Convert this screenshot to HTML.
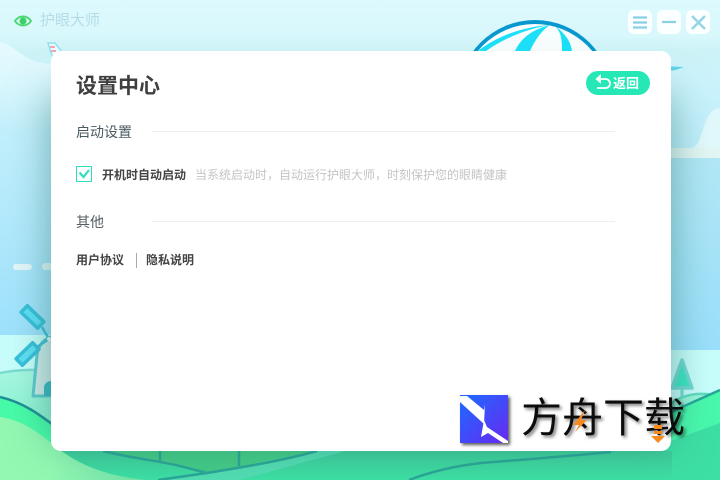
<!DOCTYPE html>
<html lang="zh"><head><meta charset="utf-8"><title>护眼大师</title>
<style>
html,body{margin:0;padding:0;width:720px;height:480px;overflow:hidden}
body{position:relative;font-family:"Liberation Sans","Noto Sans CJK SC",sans-serif}
.t{position:absolute;white-space:nowrap;line-height:1}
svg{position:absolute;left:0;top:0}
.sh{position:absolute;left:51px;top:95px;width:620px;height:345px;box-shadow:0 0 38px rgba(40,115,105,.55)}
.card{position:absolute;left:51px;top:51px;width:620px;height:400px;background:#fff;border-radius:10px}
.wb{position:absolute;top:10px;width:24px;height:24px;border-radius:6px;background:rgba(255,255,255,.88)}
.ln{position:absolute;left:152px;width:463px;height:1px;background:#eeeeee}
.logo{position:absolute;left:460px;top:395px;width:48px;height:48px;box-shadow:2px 2px 3px rgba(0,0,0,.65)}
</style></head><body>
<svg width="720" height="480" viewBox="0 0 720 480">
<defs>
<linearGradient id="sky" x1="0" y1="0" x2="0" y2="1"><stop offset="0" stop-color="#ddfafe"/><stop offset=".1" stop-color="#d9f8fc"/><stop offset=".15" stop-color="#cdf3f7"/><stop offset=".24" stop-color="#cbf3fc"/><stop offset="1" stop-color="#9de1fc"/></linearGradient>
<linearGradient id="rsky" x1="0" y1="0" x2="0" y2="1"><stop offset="0" stop-color="#b2e8f6"/><stop offset="1" stop-color="#9adffb"/></linearGradient>
<linearGradient id="hill" x1="0" y1="0" x2="0" y2="1"><stop offset="0" stop-color="#a8f7e2"/><stop offset="1" stop-color="#6cefc0"/></linearGradient>
<linearGradient id="bl" x1="0" y1="0" x2="0" y2="1"><stop offset="0" stop-color="#fbfefe"/><stop offset="1" stop-color="#dceff0"/></linearGradient>
<linearGradient id="lg" x1="0" y1="0" x2="1" y2="1"><stop offset="0" stop-color="#1a6cff"/><stop offset="1" stop-color="#6a28f2"/></linearGradient>
<linearGradient id="cl" x1="0" y1="0" x2="0" y2="1"><stop offset="0" stop-color="#e6faff"/><stop offset="1" stop-color="#e6faff" stop-opacity="0"/></linearGradient>
<linearGradient id="hl" x1="0" y1="0" x2="1" y2="0"><stop offset=".35" stop-color="#92f8b2"/><stop offset="1" stop-color="#70dfa8"/></linearGradient>
<linearGradient id="bot" x1="0" y1="0" x2="0" y2="1"><stop offset="0" stop-color="#3ecb9a"/><stop offset="1" stop-color="#3ddfa4"/></linearGradient>
</defs>
<rect width="720" height="340" fill="url(#sky)"/>
<path d="M0 42C15 46 22 58 38 62C45 64 52 64 60 63V130H0Z" fill="url(#cl)"/>
<!-- balloon -->
<circle cx="535" cy="97" r="77" fill="#0898cf"/>
<circle cx="535" cy="98" r="74" fill="url(#bl)"/>
<path d="M550 25C522 27 497 36 478 51H486C503 39 526 29 550 25Z" fill="#1de0f8"/>
<path d="M550 25C530 30 520 40 515 51H530C535 40 542 30 550 25Z" fill="#1de0f8"/>
<path d="M555 26C562 33 562 42 562 51H572C571 42 565 33 555 26Z" fill="#1de0f8"/>
<!-- plane tail -->
<path d="M48 43L55 43L62 52L52 56Z" fill="#eafcff" stroke="#90e2f0" stroke-width="1.500"/>
<rect x="50" y="46" width="5" height="2" fill="#f2a8b0"/><rect x="51" y="50" width="5" height="2" fill="#f2a8b0"/>
<!-- ground -->
<rect x="0" y="335" width="720" height="145" fill="#c8fdfb"/>
<!-- right side sky -->
<rect x="660" y="158" width="60" height="192" fill="url(#rsky)"/>
<path d="M660 148H690C705 148 700 110 720 108V158H660Z" fill="#e2f9fc"/>
<rect x="660" y="148" width="60" height="10" fill="#e3f6f4"/>
<path d="M660 66L684 67C676 70 670 72 668 70Z" fill="#5fd6e8"/>
<rect x="13" y="264" width="19" height="6" rx="3" fill="#e4f7fa"/>
<rect x="42" y="263" width="20" height="7" rx="3.500" fill="#e3f8f8"/>
<!-- tree -->
<path d="M682 360L692 388H672Z" fill="#3fe6c4" stroke="#72d9d2" stroke-width="3.500" stroke-linejoin="round"/>
<rect x="680.500" y="388" width="3" height="16" fill="#72d9d2"/>
<!-- far hills -->
<path d="M0 373C25 367 50 368 70 373L110 380 240 400H500L640 410 668 405C685 393 700 392 720 396V480H0Z" fill="url(#hill)"/>
<path d="M0 373C20 369 40 369 60 372" fill="none" stroke="#7cdcd0" stroke-width="2.500"/>
<path d="M668 405C685 393 700 392 720 396" fill="none" stroke="#5fdcc0" stroke-width="2.500"/>
<!-- windmill -->
<path d="M33 396L37 355C38 345 45 338 52 337H70V396Z" fill="#cfecea" stroke="#5cc9cc" stroke-width="3" stroke-linejoin="round"/>
<path d="M44 396V388A7 7 0 0 1 58 388V396Z" fill="#3ab8c4"/>
<g stroke="#38c0da" fill="#5de0f4" stroke-width="3.500" stroke-linejoin="round">
<rect x="21" y="312.500" width="23" height="9" transform="rotate(44 32.500 317)"/>
<rect x="16" y="349.500" width="23" height="9" transform="rotate(-44 27.500 354)"/>
</g>
<path d="M42 327L49 339M37 347L49 339" stroke="#38c0da" stroke-width="2.500"/>
<circle cx="49" cy="339" r="2" fill="#e8fbfb"/>
<!-- main field -->
<path d="M0 397C25 403 40 415 60 430L90 451H670L720 390V480H0Z" fill="#48fba8"/>
<path d="M671 412L720 390V480H660Z" fill="#48f8ac"/>
<path d="M60 430C85 452 120 470 160 480H0V430Z" fill="#48fba8"/>
<path d="M660 445L720 423V480H660Z" fill="#3ddfa4"/>
<rect x="60" y="451" width="620" height="29" fill="url(#bot)"/>
<path d="M672 451H720V480H672Z" fill="#3ddfa4"/>
<path d="M103 451L160 462 207 473 317 451Z" fill="#44c986"/>
<path d="M207 473L317 451H345L240 480H158Z" fill="#52dbb2"/>
<path d="M0 417C25 420 42 436 60 450C85 468 110 476 145 480H0Z" fill="url(#hl)"/>
<path d="M671 412L720 390" stroke="#25a898" stroke-width="2.500" fill="none"/>
<path d="M0 397C25 403 40 415 60 430" stroke="#1f8f96" stroke-width="2.500" fill="none"/>
<path d="M103 451C130 458 160 461 180 466L207 473M158 480L207 473C250 466 285 460 317 451" stroke="#2ba596" stroke-width="2.500" fill="none"/>
<path d="M160 451V462M239 451V466" stroke="#2ba596" stroke-width="2.500" fill="none"/>
<path d="M409 480C430 472 455 466 481 463C530 459 570 456 611 452" stroke="#2ba596" stroke-width="2.500" fill="none"/>
</svg>
<div class="sh"></div>
<div class="card"></div>
<!-- titlebar -->
<svg width="720" height="480" viewBox="0 0 720 480">
<path d="M15 21C19 15 27 15 31 21C27 27 19 27 15 21Z" fill="none" stroke="#4ed874" stroke-width="2"/>
<circle cx="23" cy="21" r="3.500" fill="#3ecf68"/>
</svg>
<div class="t" style="left:40px;top:13px;font-size:15px;color:#b5dce6">护眼大师</div>
<div class="wb" style="left:628px"></div><div class="wb" style="left:657px"></div><div class="wb" style="left:686px"></div>
<svg width="720" height="480" viewBox="0 0 720 480">
<path d="M633 17.500H647M633 22.500H647M633 27.500H647M662 22H676" stroke="#8acfe2" stroke-width="2.200" fill="none"/>
<path d="M692 16L705 29M705 16L692 29" stroke="#93d5e6" stroke-width="2.400" fill="none"/>
</svg>
<!-- content -->
<div class="t" style="left:76px;top:76px;font-size:21px;font-weight:700;color:#3f3f3f">设置中心</div>
<div style="position:absolute;left:586px;top:71px;width:64px;height:24px;border-radius:12px;background:#26e8b6"></div>
<svg width="720" height="480" viewBox="0 0 720 480">
<path d="M600 79H605.500A4.500 4.500 0 0 1 605.500 88H597" fill="none" stroke="#fff" stroke-width="1.800"/>
<path d="M600.500 75V83L596 79Z" fill="#fff" stroke="#fff" stroke-width=".8"/>
</svg>
<div class="t" style="left:613px;top:77px;font-size:13px;font-weight:700;color:#fff">返回</div>
<div class="t" style="left:76px;top:125px;font-size:14px;color:#4a5a62">启动设置</div>
<div class="ln" style="top:131px"></div>
<div style="position:absolute;left:76px;top:166px;width:14px;height:14px;border:1px solid #30e0bc"></div>
<svg width="720" height="480" viewBox="0 0 720 480">
<path d="M79.500 172.500L83.500 177L89 170" fill="none" stroke="#30e0bc" stroke-width="2.200"/>
</svg>
<div class="t" style="left:102px;top:169px;font-size:12px;font-weight:700;color:#444">开机时自动启动</div>
<div class="t" style="left:195px;top:169px;font-size:12px;color:#c4c4c4">当系统启动时，自动运行护眼大师，时刻保护您的眼睛健康</div>
<div class="t" style="left:76px;top:215px;font-size:14px;color:#555f64">其他</div>
<div class="ln" style="top:221px"></div>
<div class="t" style="left:76px;top:254px;font-size:12px;font-weight:700;color:#444">用户协议</div>
<div style="position:absolute;left:136px;top:253px;width:1px;height:15px;background:#aaa"></div>
<div class="t" style="left:146px;top:254px;font-size:12px;font-weight:700;color:#444">隐私说明</div>
<!-- watermark -->
<div class="logo"></div>
<svg width="720" height="480" viewBox="0 0 720 480">
<rect x="460" y="395" width="48" height="48" fill="url(#lg)"/>
<path d="M460 396H467L484 410 485 404 484 424 460 402Z" fill="#fff"/>
<path d="M484 420L487 427 508 441V443H503L488 433 481 437Z" fill="#fff"/>
</svg>
<div class="t" style="left:521px;top:398px;font-size:41px;color:#0c0c0c;font-family:'Liberation Sans','WenQuanYi Zen Hei','Noto Sans CJK SC',sans-serif;text-shadow:2px 2px 3px rgba(0,0,0,.55)">方舟下载</div>
<svg width="720" height="480" viewBox="0 0 720 480">
<path d="M585 410L573 425H579L575 432L587 420H581L585 410Z" fill="#f58a1f"/>
<path d="M654 425H662V429H654ZM654 431H662V434H654ZM651 436H665L658 443Z" fill="#f58a1f"/>
</svg>
</body></html>
